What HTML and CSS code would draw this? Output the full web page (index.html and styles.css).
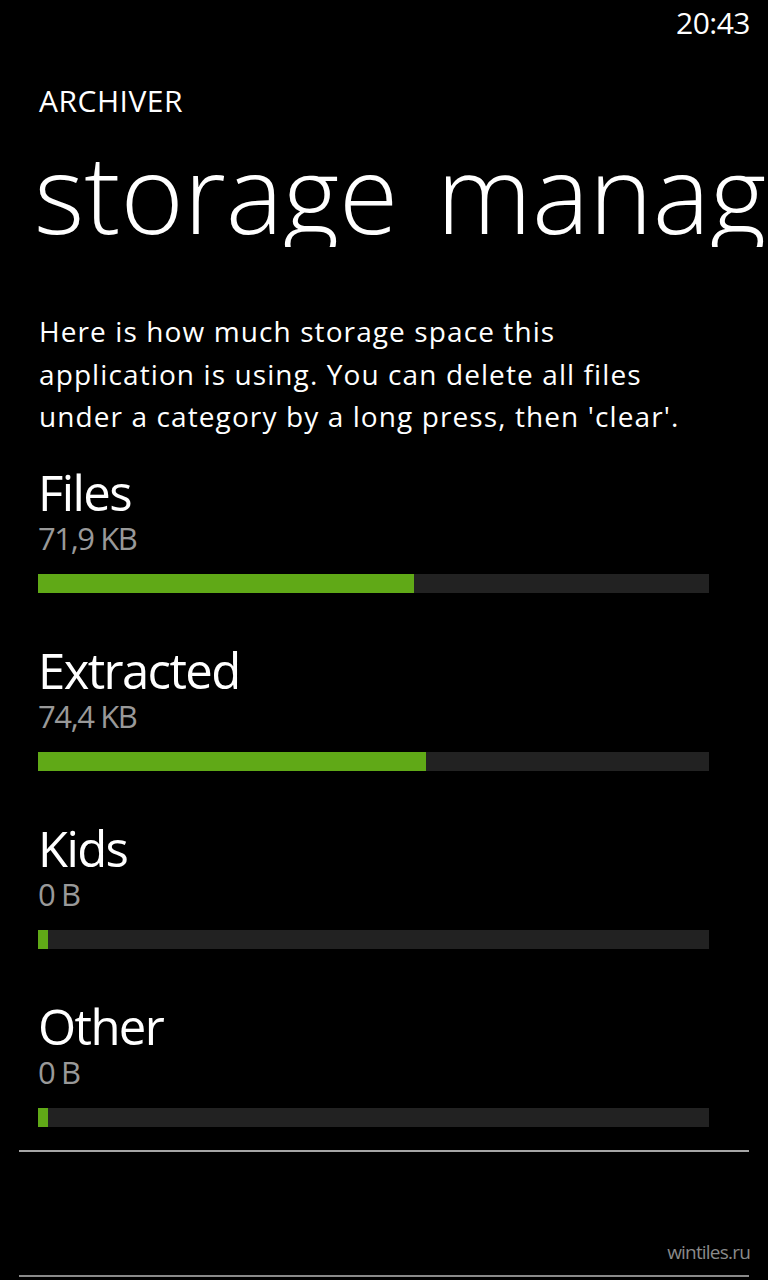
FILE: index.html
```html
<html>
<head>
	<title>Archiver - storage management</title>
<meta name="viewport" content="width=768" />
<link rel="stylesheet" href="styles.css">
</head>
<body>
  <div class="status">
    <span class="clock">20:43</span>
  </div>

  <div class="app-name">ARCHIVER</div>
  <div class="page-title">storage management</div>

  <p class="intro">Here is how much storage space this application is using. You can delete all files under a category by a long press, then 'clear'.</p>

  <div class="categories">
    <div class="category">
      <div class="cat-name">Files</div>
      <div class="cat-size">71,9 KB</div>
      <div class="bar"><div class="fill" style="width: 56%"></div></div>
    </div>
    <div class="category">
      <div class="cat-name">Extracted</div>
      <div class="cat-size">74,4 KB</div>
      <div class="bar"><div class="fill" style="width: 57.8%"></div></div>
    </div>
    <div class="category">
      <div class="cat-name">Kids</div>
      <div class="cat-size">0 B</div>
      <div class="bar"><div class="fill" style="width: 1.5%"></div></div>
    </div>
    <div class="category">
      <div class="cat-name">Other</div>
      <div class="cat-size">0 B</div>
      <div class="bar"><div class="fill" style="width: 1.5%"></div></div>
    </div>
  </div>

  <div class="divider"></div>
  <div class="footer">wintiles.ru</div>
  <div class="divider bottom"></div>
</body>
</html>
```

FILE: styles.css
```css
body {
  margin: 0;
  width: 768px;
  height: 1280px;
  overflow: hidden;
  font-family: "Open Sans", "Noto Sans", sans-serif;
  background: #000000;
  color: #ffffff;
}

.status {
  display: flex;
  justify-content: flex-end;
  padding: 8px 18px 0 0;
}

.clock {
  font-size: 30px;
  line-height: 30px;
  letter-spacing: -0.5px;
}

.app-name {
  margin: 48px 0 0 39px;
  font-size: 30px;
  line-height: 30px;
  letter-spacing: 0.5px;
}

.page-title {
  margin: 23px 0 0 34px;
  font-size: 108px;
  line-height: 108px;
  font-weight: 300;
  word-spacing: 10px;
  white-space: nowrap;
  overflow: hidden;
}

.intro {
  width: 660px;
  margin: 63px 0 0 39px;
  font-size: 28px;
  line-height: 42.5px;
  letter-spacing: 1.1px;
}

.categories {
  display: flex;
  flex-direction: column;
  gap: 52px;
  margin: 29px 59px 0 38px;
}

.cat-name {
  font-size: 49px;
  line-height: 50px;
  letter-spacing: -1.6px;
}

.cat-size {
  margin-top: 5px;
  font-size: 31px;
  line-height: 32px;
  letter-spacing: -1.4px;
  color: #999999;
}

.bar {
  margin-top: 20px;
  height: 19px;
  background: #222222;
}

.fill {
  height: 100%;
  background: #60a917;
}

.divider {
  margin: 23px 19px 0 19px;
  height: 2px;
  background: #a6a6a6;
}

.divider.bottom {
  margin-top: 13px;
  background: #8a8a8a;
}

.footer {
  margin: 90px 18px 0 0;
  text-align: right;
  font-size: 19px;
  line-height: 20px;
  letter-spacing: -0.8px;
  color: #8a8a8a;
}
```
